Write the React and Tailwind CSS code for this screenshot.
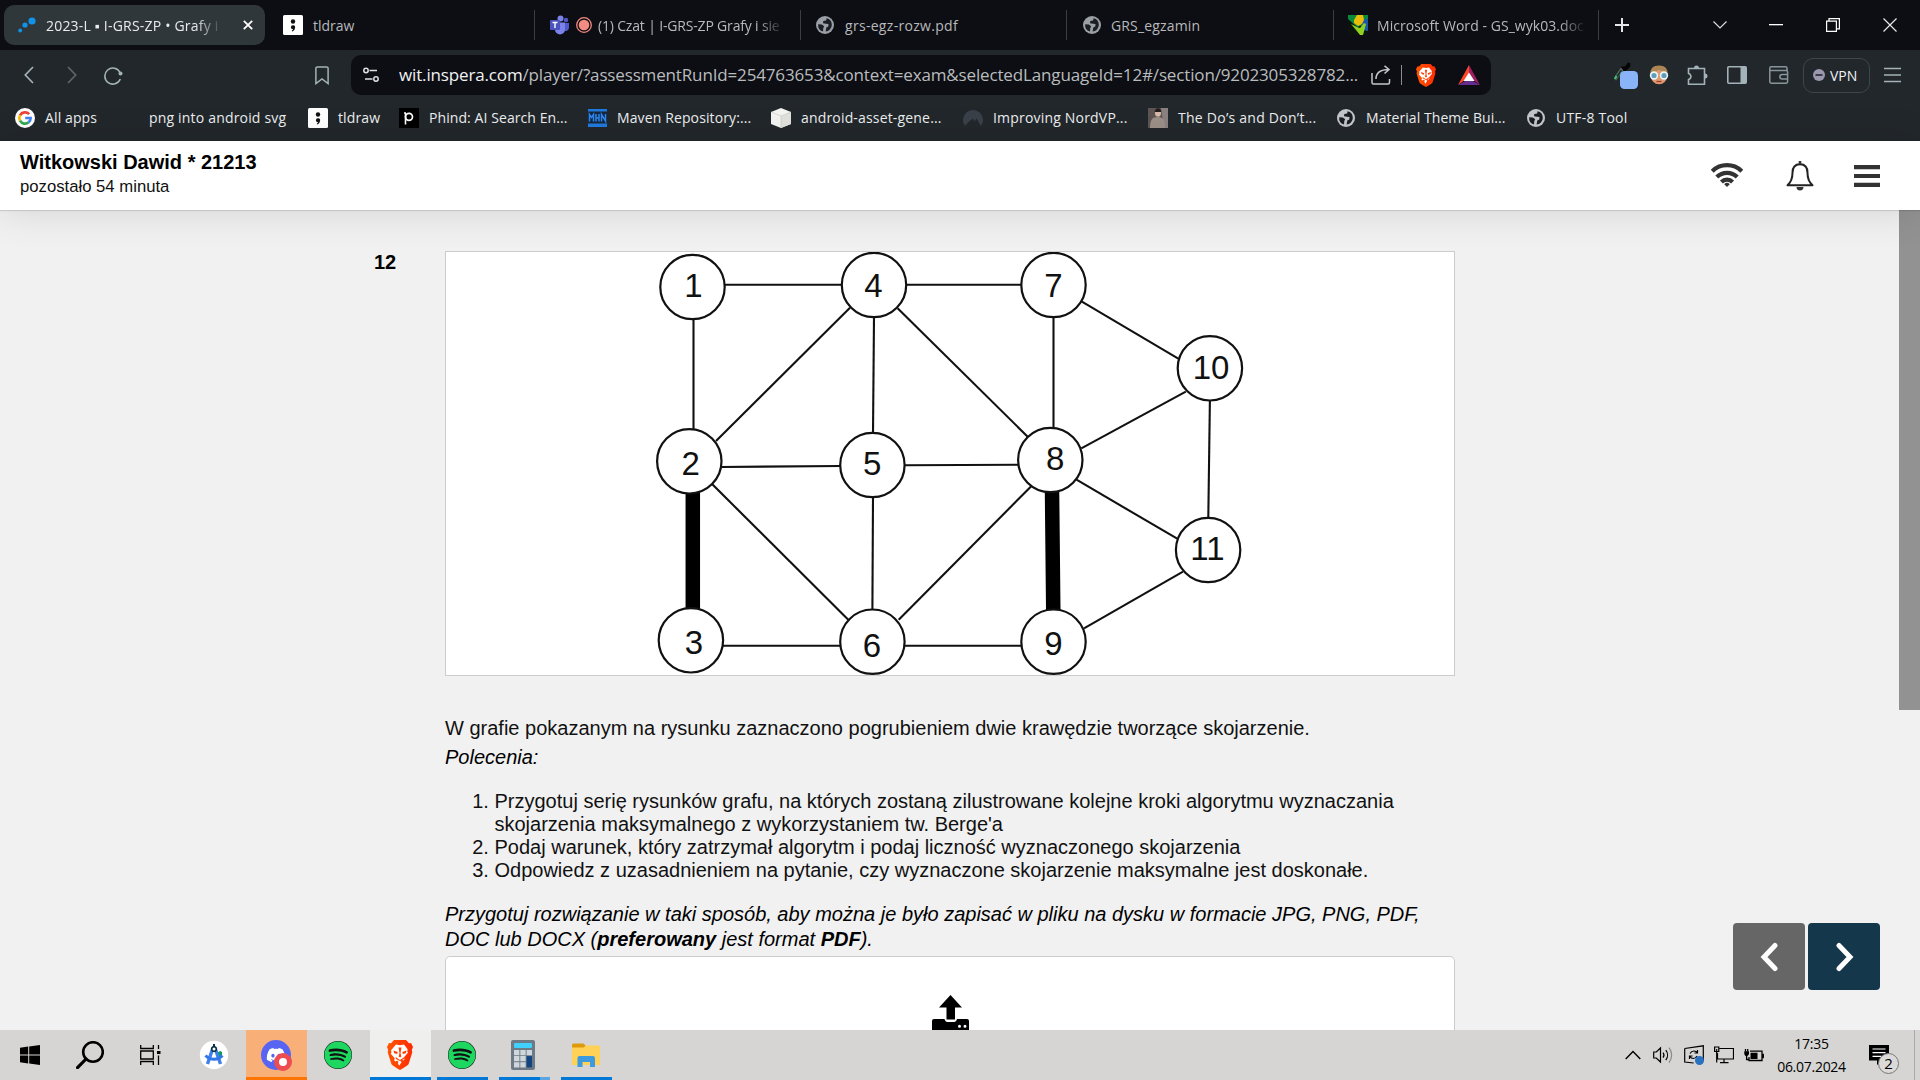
import React from "react";
import { FaSpotify, FaDiscord } from "react-icons/fa";

const ui = "font-['Open_Sans','Noto_Sans',sans-serif]";

function Globe({ color = "#9aa0a6" }) {
  return (
    <svg viewBox="0 0 18 18" className="h-[18px] w-[18px] shrink-0">
      <circle cx="9" cy="9" r="9" fill={color} />
      <path d="M10.5 2.3 L10.2 4.6 L7.3 5 L7 7.3 L10 7.8 L12.5 8 L12.3 10.6 L10.3 11.5 L9.6 15.6 A6.8 6.8 0 0 0 15.8 9 A6.8 6.8 0 0 0 10.5 2.3Z" fill="#1b1e22" />
      <path d="M2.2 8.2 L5.8 8.6 L8.2 10.2 L7.3 12 L7 15.5 A6.8 6.8 0 0 1 2.2 8.2Z" fill="#1b1e22" />
    </svg>
  );
}

function SemiIcon() {
  return (
    <svg viewBox="0 0 20 20" className="h-5 w-5 shrink-0">
      <rect width="20" height="20" rx="1.5" fill="#fff" />
      <circle cx="10" cy="6.5" r="2.2" fill="#111" />
      <path d="M7.9 12.2a2.1 2.1 0 1 1 4.1 .7c-.2 1.8-1.3 3.2-2.9 3.5l-.3-.8c.8-.3 1.2-.8 1.2-1.4c-1.1 0-2.1-.8-2.1-2z" fill="#111" />
    </svg>
  );
}

function BraveLion({ className }) {
  return (
    <svg viewBox="0 0 26 30" className={className}>
      <defs>
        <linearGradient id="lion" x1="0" x2="1">
          <stop offset="0" stopColor="#ff5601" />
          <stop offset="1" stopColor="#ff2a00" />
        </linearGradient>
      </defs>
      <path d="M7 0h12l3 3.2 2-.3 2 4-1.2 3 .5 2.4-3.6 11.5c-.5 1.5-3.5 3.3-8.7 6.2c-5.2-2.9-8.2-4.7-8.7-6.2L.7 12.3l.5-2.4L0 6.9l2-4 2 .3z" fill="url(#lion)" />
      <path d="M13 5.2l4-.6 3.6 4.6-.3 2.2 .6 1.3-3.9 4.5 .5 2.200-1 1.200-2-.9-1.500 1 1.600 1.200-1.600 2.700L13 25.600l-1.600-1.200-.6-1.600 .9-1.100-1.500-1-2 .9-1-1.200 .5-2.200-3.900-4.500 .6-1.300-.3-2.200L9 4.600z" fill="#fff" />
      <path d="M6.500 10.500l4.200 1.600-.5 1.900-3-.8zM19.500 10.500l-4.200 1.600 .5 1.900 3-.8zM11.500 7.500h3l-1 5.500 .8 3.500-1.300 1-1.300-1 .8-3.500zM8.500 17l4.500 3 4.500-3-.5 2-4 2-4-2z" fill="#ff3f00" />
    </svg>
  );
}

function Fade({ children, className }) {
  return (
    <span className={`block overflow-hidden whitespace-nowrap [mask-image:linear-gradient(to_right,#000_calc(100%-28px),transparent)] ${className}`}>
      {children}
    </span>
  );
}

function Tab({ children, className = "" }) {
  return (
    <div className={`flex h-[30px] shrink-0 items-center border-r border-[#3a3d42] text-[14px] text-[#b7b9bc] ${className}`}>
      {children}
    </div>
  );
}

function TabBar() {
  return (
    <div className="flex h-[50px] items-center bg-[#0d0e13]">
      <div className="ml-1 flex h-10 w-[261px] shrink-0 items-center rounded-[10px] bg-[#30373b] pl-3.5 text-[14px] text-[#e9ebec]">
        <svg viewBox="0 0 18 16" className="h-4 w-[18px] shrink-0" fill="#1193e8">
          <circle cx="2.200" cy="13.500" r="1.900" />
          <circle cx="7" cy="8" r="2.600" />
          <circle cx="14" cy="4" r="3.600" />
        </svg>
        <Fade className="ml-2.5 w-[177px] tracking-[0.2px]">2023-L ▪ I-GRS-ZP • Grafy i</Fade>
        <svg viewBox="0 0 10 10" className="ml-5 h-2.5 w-2.5" stroke="#fff" strokeWidth="1.800"><path d="M.8 .8l8.400 8.400M9.200 .8L.8 9.200" /></svg>
      </div>
      <Tab className="w-[270px] pl-[18px]">
        <SemiIcon />
        <span className="ml-2.5">tldraw</span>
      </Tab>
      <Tab className="w-[266px] pl-[15px]">
        <svg viewBox="0 0 19 20" className="h-5 w-[19px] shrink-0">
          <circle cx="16" cy="5" r="2.200" fill="#5059c9" />
          <path d="M13 8h6v5a3.500 3.500 0 0 1-6 2z" fill="#5059c9" />
          <circle cx="10.500" cy="3.600" r="3" fill="#7b83eb" />
          <path d="M5 7.500h10v7a5 5 0 0 1-10 0z" fill="#7b83eb" />
          <rect y="5" width="10" height="10" rx="1" fill="#4b53bc" />
          <path d="M2.500 7.500h5M5 7.500v5.500" stroke="#fff" strokeWidth="1.400" />
        </svg>
        <svg viewBox="0 0 16 18" className="ml-[7px] h-[18px] w-4 shrink-0">
          <circle cx="8" cy="9" r="7.300" fill="none" stroke="#f28b82" strokeWidth="1.300" />
          <circle cx="8" cy="9" r="5.300" fill="#f28b82" />
        </svg>
        <Fade className="ml-[6px] w-[187px] tracking-[-0.17px]">(1) Czat | I-GRS-ZP Grafy i sie</Fade>
      </Tab>
      <Tab className="w-[266px] pl-[15px]">
        <Globe />
        <span className="ml-[11px] tracking-[0.3px]">grs-egz-rozw.pdf</span>
      </Tab>
      <Tab className="w-[267px] pl-4">
        <Globe />
        <span className="ml-[10px] tracking-[0.15px]">GRS_egzamin</span>
      </Tab>
      <Tab className="w-[265px] pl-[14px]">
        <svg viewBox="0 0 20 20" className="h-5 w-5 shrink-0">
          <rect width="20" height="20" fill="#0b130c" />
          <path d="M0 0h20v9L9 12 0 4z" fill="#0a8a3c" />
          <path d="M12 4h8v12l-5-1z" fill="#1759a8" />
          <path d="M6 5l3-5h6l1 5-2 4-4 2-4-3z" fill="#e9bd0a" />
          <path d="M3 9l6 3 3 1 4-5 2 1-3 11h-3L8 15z" fill="#8ed21f" />
        </svg>
        <Fade className="ml-[9px] w-[210px] tracking-[0.05px]">Microsoft Word - GS_wyk03.doc</Fade>
      </Tab>
      <div className="flex items-center text-white">
        <svg viewBox="0 0 14 14" className="ml-4 h-3.5 w-3.5" stroke="#e4e5e6" strokeWidth="2"><path d="M7 0v14M0 7h14" /></svg>
        <svg viewBox="0 0 14 8" className="ml-[84px] h-2 w-3.5" fill="none" stroke="#dcdcdc" strokeWidth="1.200"><path d="M.5 .5l6.500 6.500 6.500-6.500" /></svg>
        <svg viewBox="0 0 14 2" className="ml-[42px] h-0.5 w-3.5"><rect width="14" height="1.300" fill="#fff" /></svg>
        <svg viewBox="0 0 14 14" className="ml-[43px] h-3.5 w-3.5" fill="none" stroke="#fff" strokeWidth="1.200"><path d="M.6 3.200h9.800v10.200H.6zM3 3V.6h10.400v10.200H10.600" /></svg>
        <svg viewBox="0 0 14 14" className="ml-[43px] h-3.5 w-3.5" stroke="#e8e8e8" strokeWidth="1.200"><path d="M.5 .5l13 13M13.500 .5l-13 13" /></svg>
      </div>
    </div>
  );
}

function Toolbar() {
  return (
    <div className="flex h-[50px] items-center">
      <svg viewBox="0 0 10 18" className="ml-6 h-[18px] w-2.5" fill="none" stroke="#a3b2b8" strokeWidth="1.700"><path d="M9 1L1.300 9 9 17" /></svg>
      <svg viewBox="0 0 10 18" className="ml-[33px] h-[18px] w-2.5" fill="none" stroke="#5c666b" strokeWidth="1.700"><path d="M1 1l7.700 8L1 17" /></svg>
      <svg viewBox="0 0 19 19" className="ml-[27px] h-[19px] w-[19px]" fill="none" stroke="#a3b2b8" strokeWidth="1.600"><path d="M16 6.500A8 8 0 1 0 16.300 13" /><circle cx="16.500" cy="7.500" r="2" fill="#a3b2b8" stroke="none" /></svg>
      <svg viewBox="0 0 14 19" className="ml-[192px] h-[19px] w-3.5" fill="none" stroke="#a3b2b8" strokeWidth="1.500"><path d="M.9 17.600V2.300A1.400 1.400 0 0 1 2.300 .9h9.400a1.400 1.400 0 0 1 1.400 1.400v15.300L7 13z" /></svg>
      <div className="ml-[22px] flex h-10 w-[1140px] items-center rounded-[10px] bg-[#0d0e13] pl-3">
        <svg viewBox="0 0 16 16" className="h-4 w-4" fill="none" stroke="#dfe1e3" strokeWidth="1.500"><circle cx="3" cy="3.500" r="2.200" /><path d="M6.500 3.500H14M2 12h7.500" /><circle cx="13" cy="12" r="2.200" /></svg>
        <span className="ml-5 w-[958px] whitespace-nowrap text-[17px] tracking-[-0.15px] text-[#b9bcbe]"><span className="text-[#f1f2f3]">wit.inspera.com</span>/player/?assessmentRunId=254763653&context=exam&selectedLanguageId=12#/section/9202305328782...</span>
        <svg viewBox="0 0 20 20" className="ml-[14px] h-5 w-5" fill="none" stroke="#c3c7c9" strokeWidth="1.500"><path d="M1 8v9.500a1.500 1.500 0 0 0 1.500 1.500H17a1.500 1.500 0 0 0 1.500-1.500V14M5 14c0-6 3.500-9.500 13-9.500M13.500 .8L18 4.500 13.500 8.500" /></svg>
        <div className="ml-[10px] h-5 w-px bg-[#8a8d90]" />
        <BraveLion className="ml-[14px] h-[23px] w-5" />
        <svg viewBox="0 0 22 20" className="ml-[22px] h-5 w-[22px]"><path d="M11 0L0 20l11-8z" fill="#ff4724" /><path d="M11 0l11 20-11-8z" fill="#9e1f63" /><path d="M0 20h22l-11-6z" fill="#662d91" /><path d="M11 7.500l5.500 8.500h-11z" fill="#fff" /></svg>
      </div>
      <div className="flex items-center">
        <svg viewBox="0 0 24 28" className="ml-[123px] h-7 w-6"><path d="M.8 18.500L8 8" stroke="#6b7075" strokeWidth="3.200" /><path d="M1 18.500l6.500-9.500" stroke="#0c3a1c" strokeWidth="1.800" /><path d="M1 18l1.500-3" stroke="#3ec46d" strokeWidth="2" /><path d="M7 5.500l4 0 3-4 2.500 1-.5 3.500-4 3.500-1.500 2z" fill="#050505" /><rect x="6" y="10" width="18" height="18" rx="4.500" fill="#8ab4f8" /></svg>
        <svg viewBox="0 0 20 20" className="ml-[11px] h-5 w-5"><ellipse cx="10" cy="10.500" rx="8.300" ry="8.800" fill="#dd9a70" /><path d="M1.500 10C.5 3.500 4.500 .5 10 .5s9.500 3 8.500 9.500L14 6 9 5 5 8z" fill="#ab8654" /><circle cx="5" cy="10.500" r="3.400" fill="#5f9eb8" stroke="#eaf6fb" strokeWidth="1.600" /><circle cx="15" cy="10.500" r="3.400" fill="#5f9eb8" stroke="#eaf6fb" strokeWidth="1.600" /><path d="M7.500 16.500h5" stroke="#a33" strokeWidth="1.300" /></svg>
        <svg viewBox="0 0 21 21" className="ml-[18px] h-[21px] w-[21px]" fill="none" stroke="#a3b2b8" strokeWidth="1.600"><path d="M1.500 3.500h16v15.700h-16v-4.700c3.200-1 3.200-5 0-6z" /><path d="M7 3a2.500 2.500 0 0 1 5 0zM18 8.500a2.500 2.500 0 0 1 0 5z" fill="#a3b2b8" stroke="none" /></svg>
        <svg viewBox="0 0 20 18" className="ml-[19px] h-[18px] w-5"><rect x=".8" y=".8" width="18.400" height="16.400" rx="1" fill="none" stroke="#a3b2b8" strokeWidth="1.600" /><path d="M13.500 1h5.700v16h-5.700z" fill="#a3b2b8" /></svg>
        <svg viewBox="0 0 20 18" className="ml-[22px] h-[18px] w-5" fill="none" stroke="#87959b" strokeWidth="1.500"><path d="M18 4.500V2.200A1.400 1.400 0 0 0 16.600 .8H2.200A1.400 1.400 0 0 0 .8 2.200v13.400a1.600 1.600 0 0 0 1.600 1.600h14.800a1.400 1.400 0 0 0 1.400-1.400V6A1.400 1.400 0 0 0 17.200 4.600H1M18.600 8.500h-5.500a2.200 2.200 0 0 0 0 4.500h5.500" /></svg>
        <div className="ml-[14px] flex h-[35px] w-[67px] items-center rounded-[10px] border border-[#3d464a] pl-[9px] text-[14px] text-[#f1f2f3]">
          <svg viewBox="0 0 12 12" className="h-3 w-3 shrink-0"><circle cx="6" cy="6" r="6" fill="#9a97ae" /><path d="M2.500 6h7" stroke="#23282c" strokeWidth="1.600" /></svg>
          <span className="ml-[5px]">VPN</span>
        </div>
        <svg viewBox="0 0 17 16" className="ml-[14px] h-4 w-[17px]" stroke="#a3b2b8" strokeWidth="1.400"><path d="M0 1.500h17M0 8h17M0 14.500h17" /></svg>
      </div>
    </div>
  );
}

function Bookmark({ icon, label, className = "", gap = "gap-2.5" }) {
  return (
    <div className={`flex shrink-0 items-center ${gap} ${className}`}>
      {icon}
      <span className="-mt-px whitespace-nowrap">{label}</span>
    </div>
  );
}

function Bookmarks() {
  return (
    <div className="flex h-[35px] items-center text-[14px] tracking-[0.12px] text-[#eceeef]">
      <Bookmark className="ml-[15px] w-[134px]" label="All apps" icon={
        <svg viewBox="0 0 20 20" className="h-5 w-5"><circle cx="10" cy="10" r="10" fill="#fff" /><g fill="none" strokeWidth="2.700"><path d="M14.200 6.200A5.700 5.700 0 0 0 5 7.300" stroke="#ea4335" /><path d="M5 7.300a5.700 5.700 0 0 0 0 5.400" stroke="#fbbc05" /><path d="M5 12.700a5.700 5.700 0 0 0 8.700 1.600" stroke="#34a853" /><path d="M13.700 14.300A5.700 5.700 0 0 0 15.600 10H10.200" stroke="#4285f4" /></g></svg>} />
      <Bookmark className="w-[159px] tracking-[0.18px]" label="png into android svg" />
      <Bookmark className="w-[91px]" label="tldraw" icon={<SemiIcon />} />
      <Bookmark className="w-[189px] tracking-[0.08px]" label="Phind: AI Search En..." icon={
        <svg viewBox="0 0 20 20" className="h-5 w-5"><rect width="20" height="20" fill="#000" /><path d="M6.500 5v11.500M5 5h2" stroke="#fff" strokeWidth="1.600" /><circle cx="10" cy="8.800" r="3.500" fill="none" stroke="#fff" strokeWidth="1.700" /></svg>} />
      <Bookmark className="w-[183px]" label="Maven Repository:..." icon={
        <svg viewBox="0 0 19 18" className="h-[18px] w-[19px]"><path d="M0 0h19v2.500H0zM0 14.500h19V18H0z" fill="#1f7ae0" /><path d="M0 3.500h19v10H0z" fill="#10284a" /><path d="M1.500 12.500V5.500l2 3 2-3v7M8 5v7.500M11 5v7.500M8 9h3M13.500 12.500V5.500l4 6.500V5" fill="none" stroke="#2f86ea" strokeWidth="1.500" /></svg>} />
      <Bookmark className="w-[192px] tracking-[0.17px]" label="android-asset-gene..." icon={
        <svg viewBox="0 0 20 20" className="h-5 w-5"><path d="M10 0l10 4v12l-10 4L0 16V4z" fill="#f4f4f2" /><path d="M10 8l10-4v12l-10 4z" fill="#e2e2dd" /><path d="M0 4l10 4 10-4M10 8v12" stroke="#c7c7c0" strokeWidth=".6" fill="none" /></svg>} />
      <Bookmark className="w-[185px] tracking-[0.19px]" label="Improving NordVP..." icon={
        <svg viewBox="0 0 20 16" className="h-4 w-5"><path d="M2 16a10 10 0 1 1 16 0l-4.500-7.500-2 3L10 8.500 5.500 12z" fill="#3a404a" /></svg>} />
      <Bookmark className="w-[189px] tracking-[0.25px]" label="The Do’s and Don’t..." icon={
        <svg viewBox="0 0 20 20" className="h-5 w-5"><rect width="20" height="20" fill="#5d5453" /><path d="M13 0h7v20h-4z" fill="#8b8080" /><path d="M2 20c0-8 2-11 8-11s7 4 7 11z" fill="#9b8f88" /><ellipse cx="10" cy="5" rx="3" ry="3.800" fill="#d8b9a8" /><path d="M6.800 4c0-5 6.400-5 6.400 0z" fill="#231d1d" /></svg>} />
      <Bookmark className="w-[190px] tracking-[0.06px]" gap="gap-[11px]" label="Material Theme Bui..." icon={<Globe color="#c4c7ca" />} />
      <Bookmark className="tracking-[0.2px]" gap="gap-[11px]" label="UTF-8 Tool" icon={<Globe color="#c4c7ca" />} />
    </div>
  );
}

function ExamHeader() {
  return (
    <header className="relative z-10 flex h-[69px] items-start justify-between bg-white shadow-[0_2px_40px_rgba(0,0,0,0.12),0_1px_1px_rgba(0,0,0,0.12)]">
      <div className="pl-5 pt-[9px]">
        <div className="text-[20px] font-bold leading-6 text-black">Witkowski Dawid * 21213</div>
        <div className="pt-px text-[16.700px] leading-6 text-[#111]">pozostało 54 minuta</div>
      </div>
      <div className="flex h-[69px] items-center pt-px pr-10">
        <svg viewBox="0 0 32 24" className="mb-0.5 h-6 w-8" fill="none" stroke="#333" strokeWidth="4.200"><path d="M1.200 8.300a21 21 0 0 1 29.600 0M5.800 14a14.500 14.500 0 0 1 20.400 0M10.400 19a8 8 0 0 1 11.200 0" /><path d="M13.200 21.200a4 4 0 0 1 5.600 0L16 24z" fill="#333" stroke="none" /></svg>
        <svg viewBox="0 0 28 30" className="ml-[43px] h-[30px] w-7"><path d="M14 3.200c-5 0-7.500 3.500-7.500 8.500 0 6-1.500 9.500-5 12.600h25c-3.500-3.100-5-6.600-5-12.600 0-5-2.500-8.500-7.500-8.500z" fill="none" stroke="#222" strokeWidth="2" strokeLinejoin="round" /><path d="M12.700 0h2.600v3h-2.600zM10.500 26h7a3.500 3.500 0 0 1-7 0z" fill="#333" /></svg>
        <svg viewBox="0 0 26 22" className="ml-10 h-[22px] w-[26px]" fill="#333"><path d="M0 0h26v4.200H0zM0 8.900h26v4.200H0zM0 17.800h26V22H0z" /></svg>
      </div>
    </header>
  );
}

// [label, circle x, circle y, text x, text baseline]
const nodes = [
  ["1", 692.5, 287, 693.5, 297], ["2", 689.3, 461.3, 690.8, 475.3], ["3", 690.9, 640.3, 694, 653.7],
  ["4", 874, 285, 873.5, 297], ["5", 872.4, 465, 872.2, 475.3], ["6", 872.4, 641.7, 872, 656.7],
  ["7", 1053.5, 285, 1053.5, 297], ["8", 1050.3, 460, 1055.2, 470], ["9", 1053.5, 641.7, 1053.5, 655],
  ["10", 1209.9, 368.3, 1211, 378.7], ["11", 1208.1, 550, 1207.5, 560],
];
// [x1, y1, x2, y2]
const edges = [
  [725, 284.7, 842, 284.7], [906, 284.7, 1022, 284.7], [693.5, 318, 693.5, 430], [716, 441, 850, 307.7],
  [897.6, 308.3, 1027.7, 436.7], [874, 317, 873, 433], [1053.5, 317, 1053.5, 428], [721, 467, 841, 466],
  [905, 465.3, 1018, 464.7], [712.3, 484.3, 848.3, 619.7], [873, 497, 872.4, 610], [1031.5, 486, 898.7, 619.7],
  [1081.9, 301.7, 1178.3, 358.7], [1185.8, 391.7, 1081.3, 448.3], [1209.9, 400, 1208.3, 518], [1076.5, 479.7, 1177.2, 538.7],
  [1183, 571.7, 1084, 628.3], [723, 645.7, 841, 645.7], [905, 645.7, 1022, 645.7],
];

function Graph() {
  return (
    <svg viewBox="446 252 1008 423" className="block h-[423px] w-[1008px]" fontFamily="Liberation Sans, sans-serif">
      <g stroke="#111" strokeWidth="2.100">
        {edges.map(([a, b, c, d], i) => <line key={i} x1={a} y1={b} x2={c} y2={d} />)}
      </g>
      <path d="M692.800 490V612M1052 489L1053.300 613" stroke="#000" strokeWidth="14.500" />
      {nodes.map(([n, x, y, tx, ty]) => (
        <g key={n}>
          <circle cx={x} cy={y} r="32.200" fill="#fff" stroke="#111" strokeWidth="2.200" />
          <text x={tx} y={ty} fontSize="33" textAnchor="middle" fill="#111">{n}</text>
        </g>
      ))}
    </svg>
  );
}

function UploadIcon() {
  return (
    <svg viewBox="0 0 37 36" className="h-9 w-[37px]">
      <path d="M18.500 0L30 12.500H23V24.500H14.500V12.500H7z" />
      <path fillRule="evenodd" d="M2 24h10.500c.5 2 1.500 3 3 3h6.500c1.500 0 2.500-1 3-3h10a2 2 0 0 1 2 2v10H0V26a2 2 0 0 1 2-2zM26 31.200a1.500 1.500 0 1 0 3 0 1.500 1.500 0 1 0-3 0zM31.500 31.200a1.500 1.500 0 1 0 3 0 1.500 1.500 0 1 0-3 0z" />
    </svg>
  );
}

function Content() {
  return (
    <div className="relative flex h-[820px] overflow-hidden bg-[#f1f1f1] text-[20px] text-[#111]">
      <div className="w-[445px] shrink-0 pl-[374px] pt-10 font-bold leading-6 text-black">12</div>
      <main className="w-[1010px] shrink-0 pt-[41px]">
        <div className="h-[425px] border border-[#ccc] bg-white"><Graph /></div>
        <p className="mt-[38px] leading-[29px]">W grafie pokazanym na rysunku zaznaczono pogrubieniem dwie krawędzie tworzące skojarzenie.</p>
        <p className="italic leading-[29px] text-black">Polecenia:</p>
        <ol className="mt-[18px] list-decimal pl-[49.500px] leading-[23px]">
          <li>Przygotuj serię rysunków grafu, na których zostaną zilustrowane kolejne kroki algorytmu wyznaczania<br />skojarzenia maksymalnego z wykorzystaniem tw. Berge'a</li>
          <li>Podaj warunek, który zatrzymał algorytm i podaj liczność wyznaczonego skojarzenia</li>
          <li>Odpowiedz z uzasadnieniem na pytanie, czy wyznaczone skojarzenie maksymalne jest doskonałe.</li>
        </ol>
        <p className="mt-5 whitespace-nowrap italic leading-[25px] text-black">Przygotuj rozwiązanie w taki sposób, aby można je było zapisać w pliku na dysku w formacie JPG, PNG, PDF,<br />DOC lub DOCX (<b>preferowany</b> jest format <b>PDF</b>).</p>
        <div className="mt-1 flex h-[200px] justify-center rounded-[5px] border border-[#ccc] bg-white pt-[38px]">
          <UploadIcon />
        </div>
      </main>
      <div className="ml-auto h-full w-[21px] bg-[#f1f1f1]"><div className="h-[500px] bg-[#929292]" /></div>
      <div className="absolute right-10 top-[713px] flex gap-[3px]">
        <button className="flex h-[67px] w-[72px] items-center justify-center rounded bg-[#666]"><svg viewBox="0 0 18 30" className="h-[30px] w-[18px]" fill="none" stroke="#fff" strokeWidth="5" strokeLinecap="round"><path d="M15 3.500L4 15l11 11.500" /></svg></button>
        <button className="flex h-[67px] w-[72px] items-center justify-center rounded bg-[#14374b] pl-0.5"><svg viewBox="0 0 18 30" className="h-[30px] w-[18px]" fill="none" stroke="#fff" strokeWidth="5" strokeLinecap="round"><path d="M3 3.500L14 15 3 26.500" /></svg></button>
      </div>
    </div>
  );
}

function Spotify() {
  return (
    <span className="flex h-7 w-7 items-center justify-center rounded-full bg-[#111]"><FaSpotify className="h-7 w-7 text-[#1ed760]" /></span>
  );
}

function Taskbar() {
  return (
    <div className={`flex h-[50px] bg-[#d6d5d3] ${ui}`}>
      <div className="flex w-[246px] items-center">
        <svg viewBox="0 0 20 20" className="ml-5 h-5 w-5"><path d="M0 2.800L8.200 1.600V9.600H0zM9.200 1.500L20 0v9.600H9.200zM0 10.500h8.200v8L0 17.300zM9.200 10.500H20V20L9.200 18.600z" /></svg>
        <svg viewBox="0 0 28 28" className="ml-9 h-7 w-7" fill="none" stroke="#000" strokeWidth="2.600"><circle cx="17" cy="11" r="9.800" /><path d="M10 18L1.500 26.700" strokeWidth="3.200" strokeLinecap="round" /></svg>
        <svg viewBox="0 0 21 20" className="ml-9 h-5 w-[21px]" fill="none" stroke="#000" strokeWidth="1.300"><path d="M.7 0v3.500h12.600V0M.7 6h12.600v8H.7zM.7 20v-3.500h12.600V20M18.500 0v4M18.500 10.500V20" /><path d="M17 6h3.500v3H17z" fill="#000" stroke="none" /></svg>
        <svg viewBox="0 0 30 30" className="ml-[38px] h-[30px] w-[30px]"><circle cx="15" cy="15" r="14.200" fill="#fff" /><path d="M17 13l4.500-2 1.500 1v4l-3 2z" fill="#0f9d58" /><path d="M13.600 9L8.500 24M16.400 9L21.500 24" stroke="#3f7fee" strokeWidth="3.400" /><path d="M6.500 15.500c4.500 5 12.500 5 17 0" stroke="#3078e8" strokeWidth="3" fill="none" /><path d="M15 4v4" stroke="#073042" strokeWidth="2" /><circle cx="15" cy="9" r="2.300" fill="#fff" stroke="#073042" strokeWidth="1.600" /></svg>
      </div>
      <div className="flex w-[61px] items-center justify-center border-b-[3px] border-[#ff7300] bg-[#f8af78] pr-px">
        <span className="relative mt-[3px] flex h-[30px] w-[30px] items-center justify-center rounded-full bg-[#5865f2]">
          <FaDiscord className="h-5 w-5 text-white" />
          <span className="absolute -right-px -bottom-px h-[18px] w-[18px] rounded-full border-[5px] border-[#ed4c50] bg-white" />
        </span>
      </div>
      <div className="flex w-[63px] items-center justify-center pr-0.5"><Spotify /></div>
      <div className="flex w-[61px] items-center justify-center border-b-[3px] border-[#0078d7] bg-[#efefee] pt-[3px] pr-px"><BraveLion className="h-[30px] w-[26px]" /></div>
      <div className="ml-1.5 flex w-[51px] items-center justify-center border-b-[3px] border-[#0078d7] pt-[3px] pr-0.5"><Spotify /></div>
      <div className="ml-[11px] flex w-[51px] flex-col">
        <div className="flex flex-1 items-center justify-center pt-[3px] pr-[3px]">
          <svg viewBox="0 0 24 30" className="h-[30px] w-6"><rect width="24" height="30" rx="2" fill="#6d7984" /><rect x="3" y="3" width="18" height="5" rx="1" fill="#3fd0fb" /><path d="M3 10h5.400v5.200H3zM9.300 10h5.400v5.200H9.300zM15.600 10H21v5.200h-5.400zM3 16.100h5.400v5.200H3zM9.300 16.100h5.400v5.200H9.300zM3 22.200h5.400v5.200H3zM9.300 22.200h5.400v5.200H9.300z" fill="#cfd6dc" /><path d="M15.600 16.100H21v11.300h-5.400z" fill="#12457f" /></svg>
        </div>
        <div className="flex h-[3px]"><div className="w-[41px] bg-[#0078d7]" /><div className="flex-1 bg-[#5ca5e0]" /></div>
      </div>
      <div className="ml-[11px] flex w-[51px] items-center justify-center border-b-[3px] border-[#0078d7] pt-[3px] pr-0.5">
        <svg viewBox="0 0 28 24" className="h-6 w-7"><path d="M0 2a1.500 1.500 0 0 1 1.500-1.500h10L14 3l-2 4H0z" fill="#dd9a0a" /><path d="M0 4.500h11.500L14 2.500h12.500A1.500 1.500 0 0 1 28 4v18H0z" fill="#ffd257" /><path d="M5.500 24V15a2 2 0 0 1 2-2h13.500a2 2 0 0 1 2 2v9h-5v-5h-7.500v5z" fill="#3d9ade" /></svg>
      </div>
      <div className="ml-auto flex items-center text-black">
        <svg viewBox="0 0 16 10" className="h-2.5 w-4" fill="none" stroke="#000" strokeWidth="1.400"><path d="M.7 9L8 1.500 15.300 9" /></svg>
        <svg viewBox="0 0 21 18" className="ml-3 h-[18px] w-[21px]" fill="none" stroke="#000" strokeWidth="1.200"><path d="M.7 6h2.600L7.500 2v14L3.300 12H.7zM10 6.500a4 4 0 0 1 0 5M12.800 4a8 8 0 0 1 0 10" /><path d="M16 1.500a12 12 0 0 1 0 15" stroke="#888" /></svg>
        <svg viewBox="0 0 20 20" className="ml-2.5 h-5 w-5" fill="none" stroke="#000" strokeWidth="1.200"><path d="M.7 3.500L19.300 .8v15.500M.7 3.500V17l9 1M6 8.500c2-3.500 6-3 7.500-.5M13.500 5v3h-3M13 11c-2 3.500-5.500 3-7 .5M5.500 14v-3h3" /><circle cx="15.500" cy="15.500" r="4.500" fill="#2a72c0" stroke="none" /></svg>
        <svg viewBox="0 0 20 18" className="ml-2.5 h-[18px] w-5" fill="none" stroke="#000" strokeWidth="1.200"><path d="M5.500 2.500h14v10.500H3.500V7M.6 1h4.200v4.500H.6zM2.700 3v13.500M10 13v3.500M6 16.600h8.500" /></svg>
        <svg viewBox="0 0 20 14" className="ml-2.5 h-3.5 w-5" fill="none" stroke="#000" strokeWidth="1.300"><path d="M6 3.200h12v9.300H5V9M18 6.500h1.300v3H18M1.500 1v2.500M3.700 1v2.500M2.600 8v3.500H5" /><path d="M.3 3.300h4.700v3L3.500 8h-2L.3 6.300zM6.500 4.800h7v6.200h-7z" fill="#000" stroke="none" /></svg>
        <div className="ml-[12px] w-[71px] whitespace-nowrap pb-px text-center text-[14px] leading-[23px] tracking-[-0.27px]"><div>17:35</div><div>06.07.2024</div></div>
        <div className="relative ml-[22px] h-[30px] w-[31px]">
          <svg viewBox="0 0 20 20" className="absolute left-0 top-[5px] h-5 w-5"><path d="M0 0h20v15.500H13L8 20v-4.500H0z" /><path d="M3.500 4h13M3.500 7.700h13M3.500 11.400h9" stroke="#fff" strokeWidth="1.200" /></svg>
          <span className="absolute left-[9px] top-[13px] flex h-[21px] w-[21px] items-center justify-center rounded-full border border-[#777] bg-[#dcdad9] text-[15px] leading-none">2</span>
        </div>
        <div className="ml-3.5 mr-[5px] h-[50px] w-px bg-[#aaa]" />
      </div>
    </div>
  );
}

export default function App() {
  return (
    <div className="h-[1080px] w-[1920px] overflow-hidden font-['Liberation_Sans',Arial,sans-serif]">
      <div className={`h-[141px] bg-[#22272b] ${ui}`}>
        <TabBar />
        <Toolbar />
        <Bookmarks />
      </div>
      <ExamHeader />
      <Content />
      <Taskbar />
    </div>
  );
}
